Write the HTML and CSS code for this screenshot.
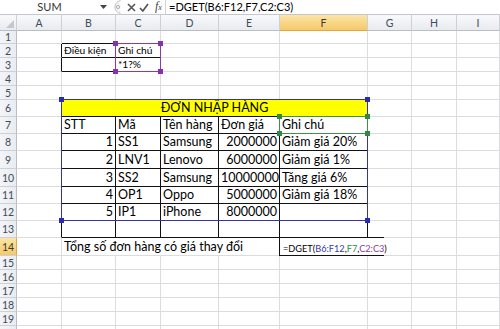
FILE: index.html
```html
<!DOCTYPE html>
<html lang="vi">
<head>
<meta charset="utf-8">
<title>DGET</title>
<link rel="stylesheet" href="styles.css">
</head>
<body>
<div class="app">
  <div class="fbar">
    <div class="namebox">SUM</div>
    <svg class="dd" width="7" height="4" viewBox="0 0 7 4"><polygon points="0,0 7,0 3.5,4" fill="#444"/></svg>
    <svg class="grip" width="10" height="14" viewBox="0 0 10 14"><path d="M9.5 0.5 C2 2 2 12 9.5 13.5" fill="#f4f4f4" stroke="#c4c4c4"/><circle cx="7" cy="7" r="1.6" fill="none" stroke="#b0b0b0"/></svg>
    <svg class="ic" width="9" height="9" viewBox="0 0 9 9"><path d="M1 1 L8 8 M8 1 L1 8" stroke="#555" stroke-width="1.6"/></svg>
    <svg class="ic ok" width="10" height="9" viewBox="0 0 10 9"><path d="M1 5 L3.8 8 L9 1" fill="none" stroke="#555" stroke-width="1.7"/></svg>
    <span class="fx">f<span class="sx">x</span></span>
    <div class="ftext">=DGET(B6:F12,F7,C2:C3)</div>
  </div>
  <table class="sheet">
    <colgroup>
      <col class="c-rh"><col class="c-a"><col class="c-b"><col class="c-c"><col class="c-d"><col class="c-e"><col class="c-f"><col class="c-g"><col class="c-h"><col class="c-i">
    </colgroup>
    <tr class="hdr">
      <th class="corner"><svg class="tri" width="8" height="8" viewBox="0 0 8 8"><polygon points="8,0 8,8 0,8" fill="#c3c8cf"/></svg></th>
      <th>A</th><th>B</th><th>C</th><th>D</th><th>E</th><th class="sel">F</th><th>G</th><th>H</th><th>I</th>
    </tr>
    <tr class="h13"><td class="rh">1</td><td></td><td class="b"></td><td class="b"></td><td></td><td></td><td></td><td></td><td></td><td></td></tr>
    <tr class="h14 sm"><td class="rh">2</td><td class="r"></td><td class="r b">Điều kiện</td><td class="r b">Ghi chú</td><td></td><td></td><td></td><td></td><td></td><td></td></tr>
    <tr class="h14 sm"><td class="rh">3</td><td class="r"></td><td class="r b"></td><td class="r b">*1?%</td><td></td><td></td><td></td><td></td><td></td><td></td></tr>
    <tr class="h14"><td class="rh">4</td><td></td><td></td><td></td><td></td><td></td><td></td><td></td><td></td><td></td></tr>
    <tr class="h14"><td class="rh">5</td><td></td><td class="b"></td><td class="b"></td><td class="b"></td><td class="b"></td><td class="b"></td><td></td><td></td><td></td></tr>
    <tr class="h17"><td class="rh">6</td><td class="r"></td><td class="r b title" colspan="5">ĐƠN NHẬP HÀNG</td><td></td><td></td><td></td></tr>
    <tr class="h17"><td class="rh">7</td><td class="r"></td><td class="r b">STT</td><td class="r b">Mã</td><td class="r b">Tên hàng</td><td class="r b">Đơn giá</td><td class="r b">Ghi chú</td><td></td><td></td><td></td></tr>
    <tr class="h17"><td class="rh">8</td><td class="r"></td><td class="r b num">1</td><td class="r b">SS1</td><td class="r b">Samsung</td><td class="r b num">2000000</td><td class="r b">Giảm giá 20%</td><td></td><td></td><td></td></tr>
    <tr class="h18"><td class="rh">9</td><td class="r"></td><td class="r b num">2</td><td class="r b">LNV1</td><td class="r b">Lenovo</td><td class="r b num">6000000</td><td class="r b">Giảm giá 1%</td><td></td><td></td><td></td></tr>
    <tr class="h18"><td class="rh">10</td><td class="r"></td><td class="r b num">3</td><td class="r b">SS2</td><td class="r b">Samsung</td><td class="r b num">10000000</td><td class="r b">Tăng giá 6%</td><td></td><td></td><td></td></tr>
    <tr class="h17"><td class="rh">11</td><td class="r"></td><td class="r b num">4</td><td class="r b">OP1</td><td class="r b">Oppo</td><td class="r b num">5000000</td><td class="r b">Giảm giá 18%</td><td></td><td></td><td></td></tr>
    <tr class="h17"><td class="rh">12</td><td class="r"></td><td class="r b num">5</td><td class="r b">IP1</td><td class="r b">iPhone</td><td class="r b num">8000000</td><td class="r b"></td><td></td><td></td><td></td></tr>
    <tr class="h17"><td class="rh">13</td><td class="r"></td><td class="r b"></td><td class="r b"></td><td class="r b"></td><td class="r b"></td><td class="r b"></td><td></td><td></td><td></td></tr>
    <tr class="h18"><td class="rh sel">14</td><td></td><td class="r" colspan="4">Tổng số đơn hàng có giá thay đổi</td><td></td><td></td><td></td><td></td></tr>
    <tr class="h14"><td class="rh">15</td><td></td><td></td><td></td><td></td><td></td><td></td><td></td><td></td><td></td></tr>
    <tr class="h14"><td class="rh">16</td><td></td><td></td><td></td><td></td><td></td><td></td><td></td><td></td><td></td></tr>
    <tr class="h14"><td class="rh">17</td><td></td><td></td><td></td><td></td><td></td><td></td><td></td><td></td><td></td></tr>
    <tr class="h14"><td class="rh">18</td><td></td><td></td><td></td><td></td><td></td><td></td><td></td><td></td><td></td></tr>
    <tr class="h14"><td class="rh">19</td><td></td><td></td><td></td><td></td><td></td><td></td><td></td><td></td><td></td></tr>
    <tr class="h14"><td class="rh"></td><td></td><td></td><td></td><td></td><td></td><td></td><td></td><td></td><td></td></tr>
  </table>

  <div class="rng blue"><i class="hd tl"></i><i class="hd tr"></i><i class="hd bl"></i><i class="hd br"></i></div>
  <div class="rng green"><i class="hd tl"></i><i class="hd tr"></i><i class="hd bl"></i><i class="hd br"></i></div>
  <div class="rng purple"><i class="hd tl"></i><i class="hd tr"></i><i class="hd bl"></i><i class="hd br"></i></div>

  <div class="edit">=DGET(<span class="fb">B6:F12</span>,<span class="fg">F7</span>,<span class="fp">C2:C3</span>)</div>
</div>
</body>
</html>
```
FILE: styles.css
```css
* { box-sizing: border-box; }

body {
  margin: 0;
  background: #fff;
  font-family: Lato, "Noto Sans", sans-serif;
  color: #000;
}

.app {
  position: relative;
  width: 500px;
  height: 329px;
  overflow: hidden;
}

/* formula bar */
.fbar {
  display: flex;
  align-items: center;
  height: 14px;
  font-size: 11px;
  color: #222;
  background: #fff;
}
.namebox {
  width: 99px;
  text-align: center;
  line-height: 14px;
  color: #333;
}
.dd { margin-left: 1px; }
.grip { margin-left: 4px; }
.ic { margin-left: 6px; }
.ic.ok { margin-left: 3px; }
.fx {
  margin-left: 6px;
  font-family: "Liberation Serif", serif;
  font-style: italic;
  font-size: 12px;
  color: #444;
  width: 10px;
  line-height: 14px;
}
.fx .sx { font-size: 8px; }
.ftext {
  margin-left: 0;
  border-left: 1px solid #cfd3d8;
  padding-left: 3px;
  height: 14px;
  line-height: 14px;
  font-size: 11px;
  color: #000;
  flex: 1;
}

/* sheet */
.sheet {
  border-collapse: separate;
  border-spacing: 0;
  table-layout: fixed;
  width: 500px;
}
.c-rh { width: 17px; }
.c-a { width: 45px; }
.c-b { width: 54px; }
.c-c { width: 45px; }
.c-d { width: 58px; }
.c-e { width: 61px; }
.c-f { width: 88px; }
.c-g { width: 44px; }
.c-h { width: 45px; }
.c-i { width: 43px; }

.sheet td, .sheet th {
  padding: 0 2px;
  border-right: 1px solid #dadcdd;
  border-bottom: 1px solid #dadcdd;
  white-space: nowrap;
  overflow: visible;
  vertical-align: bottom;
  font-size: 12.5px;
  line-height: 12px;
  font-weight: normal;
}

.hdr { height: 17px; }
.h13 { height: 13px; }
.h14 { height: 14px; }
.h17 { height: 17px; }
.h18 { height: 18px; }
.h17 td, .h18 td { padding-bottom: 2px; }
.h14 td { padding-bottom: 1px; }
.sm td { font-size: 10.2px; line-height: 11px; }

.sheet th {
  background: linear-gradient(#f8f9fb, #e8ebef);
  border-top: 1px solid #c3c7cd;
  border-right: 1px solid #cdd1d7;
  border-bottom: 1px solid #b9bec5;
  color: #3f4b5b;
  font-size: 10.5px;
  text-align: center;
  vertical-align: middle;
  line-height: 14px;
}
.sheet th.corner {
  position: relative;
  padding: 0;
}
.tri {
  position: absolute;
  right: 2px;
  bottom: 2px;
}
.sheet th.sel {
  background: linear-gradient(#fbe5a6, #f5c96a);
  border-bottom-color: #e3a73d;
  color: #3f3a2a;
}

.sheet td.rh {
  padding: 0;
  background: linear-gradient(90deg, #f4f5f8, #e9ecf0);
  border-right: 1px solid #b9bec5;
  border-bottom: 1px solid #cdd1d7;
  color: #3f4b5b;
  font-size: 10.5px;
  text-align: center;
  vertical-align: middle;
  line-height: 12px;
}
.sheet td.rh.sel {
  background: linear-gradient(#fbe5a6, #f5c96a);
  border-right-color: #e3a73d;
  color: #3f3a2a;
}

.sheet td.r { border-right-color: #111; }
.sheet td.b { border-bottom-color: #111; }
.sheet td.num { text-align: right; }
.sheet td.title {
  background: #ffff00;
  text-align: center;
}

/* range highlights */
.rng {
  position: absolute;
  border: 1px solid;
  pointer-events: none;
}
.blue { left: 61px; top: 99px; width: 307px; height: 122px; border-color: #3434a8; }
.green { left: 279px; top: 116px; width: 89px; height: 18px; border-color: #3f8f4f; }
.purple { left: 115px; top: 43px; width: 46px; height: 29px; border-color: #8a3aa6; }

.hd {
  position: absolute;
  width: 5px;
  height: 5px;
}
.blue .hd { background: #2b2bb0; }
.green .hd { background: #2f8a3f; }
.purple .hd { background: #8a2fb0; }
.hd.tl { left: -3px; top: -3px; }
.hd.tr { right: -3px; top: -3px; }
.hd.bl { left: -3px; bottom: -3px; }
.hd.br { right: -3px; bottom: -3px; }

/* in-cell edit box */
.edit {
  position: absolute;
  left: 279px;
  top: 237px;
  width: 105px;
  height: 19px;
  background: #fff;
  border: 1px solid #111;
  border-right: none;
  padding: 5px 0 0 3px;
  font-size: 9.2px;
  line-height: 12px;
  white-space: nowrap;
  color: #000;
}
.fb { color: #3535b5; }
.fg { color: #2f8a3f; }
.fp { color: #8a3aa6; }
```
